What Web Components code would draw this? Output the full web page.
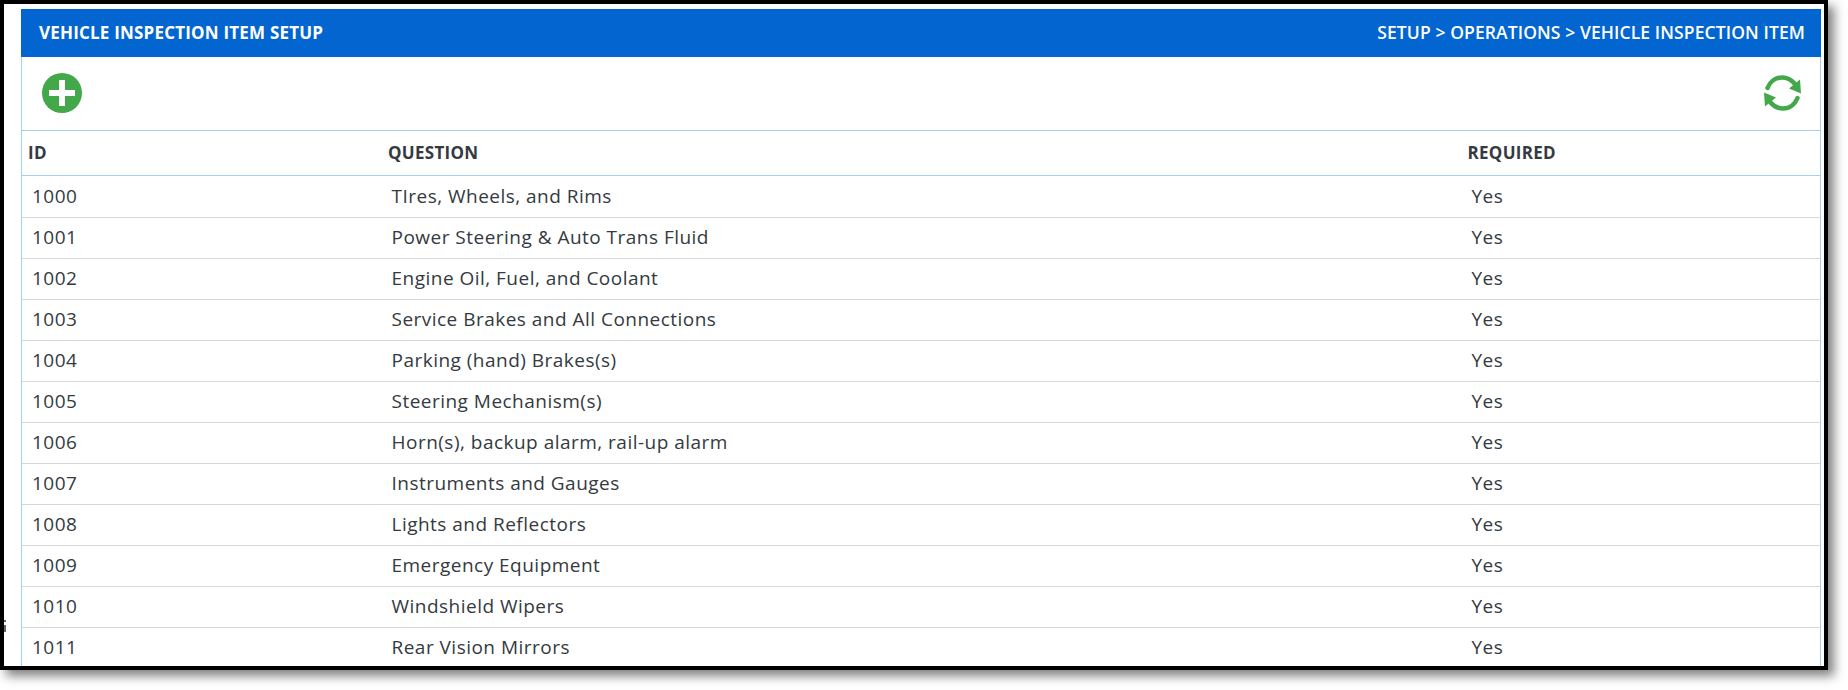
<!DOCTYPE html>
<html>
<head>
<meta charset="utf-8">
<style>
    html, body { margin: 0; background: #fff; }
    body { font-family: "Open Sans", "Noto Sans", sans-serif; color: #343a40; height: 690px; overflow: hidden; }
</style>
</head>
<body>
<setup-page>
    <page-header slot="header" title="VEHICLE INSPECTION ITEM SETUP" crumbs="SETUP > OPERATIONS > VEHICLE INSPECTION ITEM"></page-header>
    <page-toolbar slot="toolbar"></page-toolbar>
    <item-table id="table"></item-table>
</setup-page>
<script>
const pageTemplate = document.createElement("template");
pageTemplate.innerHTML = `
    <style>
        :host {
            display: block;
            box-sizing: border-box;
            width: 1828px;
            height: 670px;
            border: 4px solid #000;
            background: #fff;
            box-shadow: 6px 6px 10px rgba(0, 0, 0, 0.5);
            padding: 5px 3px 0 17px;
            overflow: hidden;
            position: relative;
        }
        .panel {
            height: 100%;
            border-left: 1px solid #a5cdf5;
            border-right: 1px solid #a5cdf5;
            box-sizing: border-box;
        }
        .smudge {
            position: absolute;
            left: 0;
            width: 2px;
            background: #666;
        }
    </style>
    <div class="smudge" style="top: 616px; height: 2px"></div>
    <div class="smudge" style="top: 621px; height: 7px"></div>
    <slot name="header"></slot>
    <div class="panel">
        <slot name="toolbar"></slot>
        <slot></slot>
    </div>
`;

class SetupPage extends HTMLElement {
    constructor() {
        super();
        this.attachShadow({ mode: "open" });
        this.shadowRoot.appendChild(pageTemplate.content.cloneNode(true));
    }
}

class PageHeader extends HTMLElement {
    constructor() {
        super();
        this.attachShadow({ mode: "open" });
        this.shadowRoot.innerHTML = `
            <style>
                :host {
                    display: flex;
                    justify-content: space-between;
                    height: 48px;
                    background: #0366d0;
                    color: #fff;
                    padding: 0 16px 0 18px;
                    font-size: 17px;
                }
                .title { font-weight: 700; line-height: 48px; letter-spacing: 0.2px; }
                .crumbs { line-height: 46px; font-size: 17.5px; font-weight: 600; letter-spacing: 0.1px; }
            </style>
            <div class="title"></div>
            <div class="crumbs"></div>
        `;
        this.shadowRoot.querySelector(".title").textContent = this.getAttribute("title");
        this.shadowRoot.querySelector(".crumbs").textContent = this.getAttribute("crumbs");
    }
}

class PageToolbar extends HTMLElement {
    constructor() {
        super();
        this.attachShadow({ mode: "open" });
        this.shadowRoot.innerHTML = `
            <style>
                :host {
                    display: flex;
                    justify-content: space-between;
                    align-items: center;
                    box-sizing: border-box;
                    height: 74px;
                    padding: 0 19px 2px 20px;
                    border-bottom: 1px solid #a5cdf5;
                }
                svg { display: block; }
            </style>
            <svg width="40" height="40" viewBox="0 0 40 40">
                <circle cx="20" cy="20" r="20" fill="#43a84a"/>
                <path d="M17 7h6v10h10v6H23v10h-6V23H7v-6h10z" fill="#fff"/>
            </svg>
            <svg width="37" height="36" viewBox="0 0 37 36" fill="none">
                <path d="M3.500 13C6 6.500 11.500 2.500 18 2.500c5.500 0 9.500 2.500 12.500 6" stroke="#43a84a" stroke-width="4.500" stroke-linecap="round"/>
                <path d="M36 4.500l1 14-12-5z" fill="#43a84a"/>
                <path d="M33.500 23C31 29.500 25.500 33.500 19 33.500c-5.500 0-9.500-2.500-12.500-6" stroke="#43a84a" stroke-width="4.500" stroke-linecap="round"/>
                <path d="M1 31.500L0 17.500l12 5z" fill="#43a84a"/>
            </svg>
        `;
    }
}

class ItemRow extends HTMLElement {
    constructor() {
        super();
        this.attachShadow({ mode: "open" });
        this.shadowRoot.innerHTML = `
            <style>
                :host {
                    display: grid;
                    grid-template-columns: 359.5px 1080px 1fr;
                    box-sizing: border-box;
                    height: 41px;
                    border-bottom: 1px solid #d5d9de;
                    font-size: 19px;
                    letter-spacing: 0.48px;
                    line-height: 38px;
                    padding-left: 10px;
                }
                :host([head]) {
                    height: 45px;
                    border-bottom-color: #a5cdf5;
                    font-size: 17px;
                    letter-spacing: 0.3px;
                    font-weight: 700;
                    line-height: 43px;
                    padding-left: 6px;
                    grid-template-columns: 360px 1079.5px 1fr;
                }
            </style>
            <div><slot name="id"></slot></div>
            <div><slot name="question"></slot></div>
            <div><slot name="required"></slot></div>
        `;
    }
}

class ItemTable extends HTMLElement {
    constructor() {
        super();
        this.attachShadow({ mode: "open" });
        const questions = [
            "TIres, Wheels, and Rims",
            "Power Steering & Auto Trans Fluid",
            "Engine Oil, Fuel, and Coolant",
            "Service Brakes and All Connections",
            "Parking (hand) Brakes(s)",
            "Steering Mechanism(s)",
            "Horn(s), backup alarm, rail-up alarm",
            "Instruments and Gauges",
            "Lights and Reflectors",
            "Emergency Equipment",
            "Windshield Wipers",
            "Rear Vision Mirrors"
        ];
        this.shadowRoot.innerHTML = `<style>
            :host { display: block; }
            item-row:nth-child(3) { height: 42px; line-height: 40px; }
        </style>`;
        const addRow = (id, question, required, head) => {
            const row = document.createElement("item-row");
            if (head) row.setAttribute("head", "");
            [["id", id], ["question", question], ["required", required]].forEach(([name, text]) => {
                const span = document.createElement("span");
                span.slot = name;
                span.textContent = text;
                row.appendChild(span);
            });
            this.shadowRoot.appendChild(row);
        };
        addRow("ID", "QUESTION", "REQUIRED", true);
        questions.forEach((q, i) => addRow(String(1000 + i), q, "Yes", false));
    }
}

window.customElements.define("item-row", ItemRow);
window.customElements.define("item-table", ItemTable);
window.customElements.define("page-toolbar", PageToolbar);
window.customElements.define("page-header", PageHeader);
window.customElements.define("setup-page", SetupPage);
</script>
</body>
</html>
